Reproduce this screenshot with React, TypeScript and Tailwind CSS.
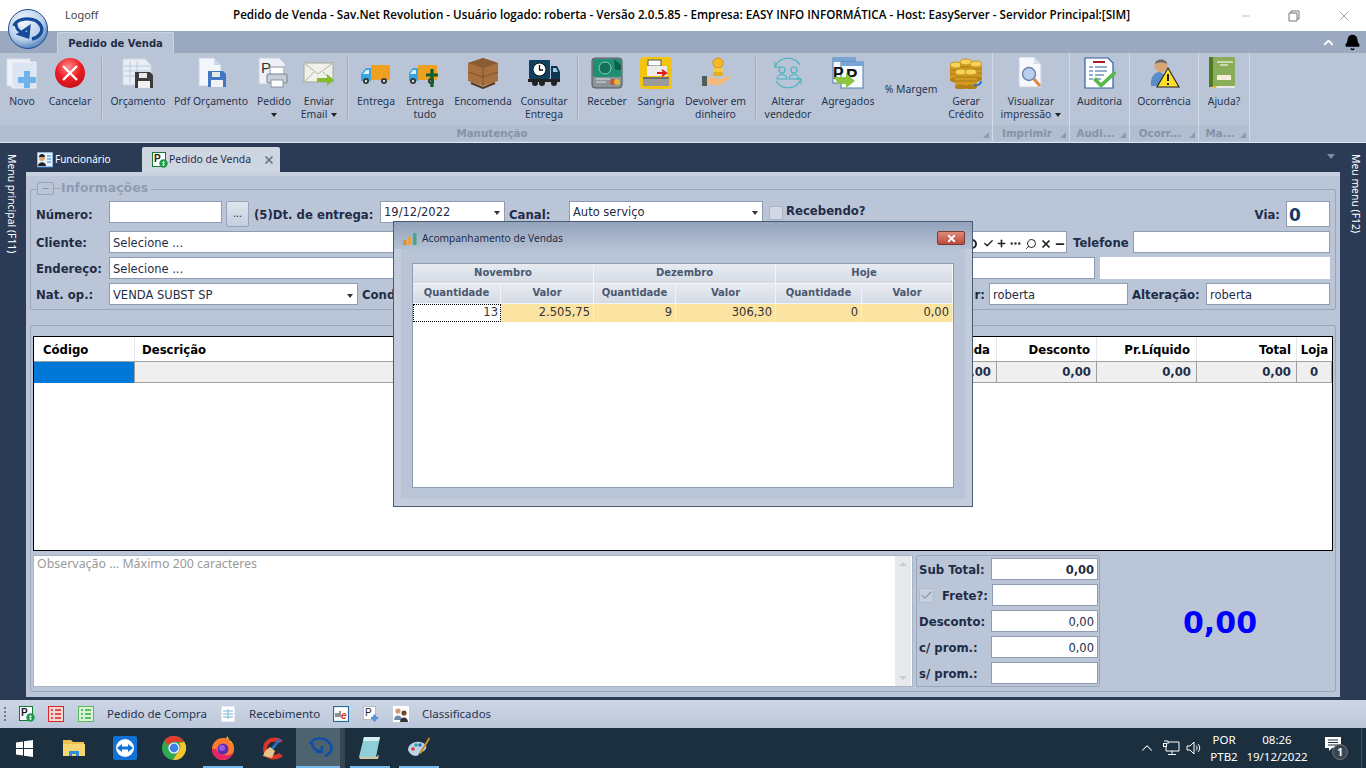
import type { ReactNode } from 'react'
import { ChevronUp, Bell, Check, Plus, Ellipsis, Search, X, Minus } from 'lucide-react'

const bold = "font-['DejaVu_Sans',sans-serif] font-bold text-[11.7px] text-[#1f2c47] whitespace-nowrap pt-[3px]"
const field = "font-['DejaVu_Sans',sans-serif] text-[11.5px] text-[#1f2c47]"

const Ic = ({ children, w = 32 }: { children: ReactNode; w?: number }) => (
  <svg width={w} height={32} viewBox={`0 0 ${w} 32`} className="block shrink-0">
    {children}
  </svg>
)

const Floppy = ({ x, y, c = '#3c3c3c' }: { x: number; y: number; c?: string }) => (
  <g transform={`translate(${x} ${y})`}>
    <path d="M0 0h15l3 3v13H0z" fill={c} />
    <rect x="4" y="1" width="8" height="5" fill="#e8e8e8" />
    <rect x="3" y="9" width="12" height="7" fill="#f2f2f2" />
  </g>
)

const Truck = ({ x = 0 }: { x?: number }) => (
  <g transform={`translate(${x} 0)`}>
    <rect x="11" y="8" width="19" height="15" rx="1" fill="#f0a020" />
    <path d="M1 24v-7l5-6h5v13z" fill="#3aa6e0" />
    <path d="M3 17l3-4h3v4z" fill="#d8f0fb" />
    <circle cx="6" cy="24" r="3" fill="#333" />
    <circle cx="6" cy="24" r="1.2" fill="#ddd" />
    <circle cx="24" cy="24" r="3" fill="#333" />
    <circle cx="24" cy="24" r="1.2" fill="#ddd" />
  </g>
)

const icons: Record<string, ReactNode> = {
  novo: (
    <Ic>
      <rect x="1" y="2" width="23" height="27" fill="#eef2f8" stroke="#d6dde8" />
      <rect x="6" y="5" width="24" height="26" fill="#dbe5f4" stroke="#eef2f8" />
      <path d="M18 16h6v6h6v6h-6v5h-6v-5h-6v-6h6z" fill="#6fb1e8" transform="translate(0 -2)" />
    </Ic>
  ),
  cancelar: (
    <Ic>
      <defs>
        <radialGradient id="cancelRed" cx="0.45" cy="0.3" r="0.8">
          <stop offset="0" stopColor="#ff8a8a" />
          <stop offset="0.5" stopColor="#ee1c25" />
          <stop offset="1" stopColor="#b80d14" />
        </radialGradient>
      </defs>
      <circle cx="16" cy="16" r="15" fill="url(#cancelRed)" />
      <path d="M9 9l14 14M23 9L9 23" stroke="#fff" strokeWidth="2.4" />
    </Ic>
  ),
  orcamento: (
    <Ic>
      <path d="M1 2h22l6 6v20H1z" fill="#e9eef5" stroke="#cfd6e0" />
      <path d="M2 9h26M2 14h26M2 19h26M8 4v22M15 4v22" stroke="#b9cbe0" />
      <Floppy x={13} y={15} />
    </Ic>
  ),
  pdf: (
    <Ic>
      <path d="M4 1h15l7 7v21H4z" fill="#f3f6fc" stroke="#c5d0e4" />
      <path d="M19 1v7h7z" fill="#cbd6ea" />
      <Floppy x={13} y={14} c="#3f78c0" />
    </Ic>
  ),
  pedido: (
    <Ic>
      <path d="M1 1h20l6 6v20H1z" fill="#eef1f6" stroke="#c9d0dc" />
      <text x="3" y="16" fontSize="15" fontFamily="'Liberation Sans',sans-serif" fill="#333">P</text>
      <rect x="12" y="10" width="14" height="8" fill="#fff" stroke="#8a94a5" />
      <rect x="9" y="17" width="20" height="9" rx="1" fill="#c8ced8" stroke="#77818f" />
      <rect x="13" y="23" width="12" height="7" fill="#fff" stroke="#8a94a5" />
    </Ic>
  ),
  email: (
    <Ic>
      <rect x="1" y="6" width="29" height="19" fill="#eff0ea" stroke="#a5a89e" />
      <path d="M1 6l14 11L30 6M1 25l10-10M30 25L20 15" fill="none" stroke="#b5b8ad" />
      <path d="M14 21h10v-4l7 6-7 6v-4H14z" fill="#82bd2c" />
    </Ic>
  ),
  entrega: <Ic><Truck /></Ic>,
  tudo: (
    <Ic>
      <Truck x={-2} />
      <path d="M17 18h12M23 12v18" stroke="#0b5c2b" strokeWidth="3.2" />
    </Ic>
  ),
  encomenda: (
    <Ic>
      <path d="M1 6l15-5 15 5v18l-15 5-15-5z" fill="#a8703f" />
      <path d="M1 6l15 5 15-5-15-5z" fill="#8a5c34" />
      <path d="M16 11v18M1 15l15 5 15-5" stroke="#7d5330" fill="none" />
      <path d="M4 26l12 5 12-5" stroke="#57391f" strokeWidth="2" fill="none" />
    </Ic>
  ),
  consultar: (
    <Ic>
      <rect x="1" y="3" width="21" height="19" rx="1" fill="#10405f" />
      <path d="M23 9h6l3 6v8h-9z" fill="#0c3550" />
      <path d="M25 11h3l2 4h-5z" fill="#9ecbe2" />
      <rect x="0" y="22" width="32" height="3" fill="#222" />
      <circle cx="11.5" cy="12.5" r="6.5" fill="#fff" stroke="#111" />
      <path d="M11.5 8v5h3.5" stroke="#111" strokeWidth="1.3" fill="none" />
      <circle cx="7" cy="26" r="3" fill="#222" />
      <circle cx="14" cy="26" r="3" fill="#222" />
      <circle cx="26" cy="26" r="3" fill="#222" />
    </Ic>
  ),
  receber: (
    <Ic>
      <rect x="1" y="1" width="30" height="30" rx="3" fill="#8a9499" stroke="#555" />
      <rect x="2" y="2" width="28" height="18" rx="2" fill="#1f8f73" />
      <circle cx="14" cy="11" r="6" fill="#177058" stroke="#7fd0ba" />
      <path d="M23 2l7 6v5h-6z" fill="#0f5f4b" />
      <path d="M5 22h14M5 25h10" stroke="#dfe3e3" />
      <circle cx="22" cy="25" r="3" fill="#c9524a" />
      <circle cx="26" cy="25" r="3" fill="#e5b52e" />
    </Ic>
  ),
  sangria: (
    <Ic>
      <rect x="0" y="0" width="32" height="32" rx="4" fill="#f4c411" />
      <rect x="8" y="3" width="13" height="6" fill="#fff" stroke="#555" />
      <rect x="7" y="9" width="20" height="10" fill="#ececec" />
      <path d="M17 16h8M22 13l4 3-4 3" stroke="#e01a1a" strokeWidth="2" fill="none" />
      <rect x="3" y="20" width="26" height="9" fill="#9a9a9a" />
      <rect x="3" y="20" width="26" height="2" fill="#6d6d6d" />
    </Ic>
  ),
  devolver: (
    <Ic>
      <circle cx="18" cy="6" r="5" fill="#f5b921" stroke="#d58f12" />
      <rect x="13" y="11" width="10" height="4" rx="1.5" fill="#f5c93a" />
      <rect x="13" y="15" width="10" height="4" rx="1.5" fill="#e6ae1f" />
      <rect x="2" y="19" width="5" height="10" fill="#4e5e5c" />
      <path d="M7 21c5-3 8 0 12 1l10-3c2 0 2 2 0 3l-9 6c-4 1-9-1-13-1z" fill="#f4ba7d" />
    </Ic>
  ),
  alterar: (
    <Ic>
      <g fill="none" stroke="#3fb3bd" strokeWidth="1.1">
        <path d="M3 10a14 14 0 0 1 25-2M29 22a14 14 0 0 1-25 2" />
        <path d="M3 5v5h5M29 27v-5h-5" />
        <circle cx="10" cy="13" r="3" />
        <circle cx="22" cy="13" r="3" />
        <path d="M5 22c0-6 10-6 10 0zM17 22c0-6 10-6 10 0z" />
      </g>
    </Ic>
  ),
  agregados: (
    <Ic>
      <rect x="1" y="1" width="22" height="25" fill="#f5f7fb" stroke="#4d7fb5" />
      <rect x="1" y="1" width="22" height="4" fill="#77a6d6" />
      <rect x="9" y="5" width="22" height="26" fill="#f8fafd" stroke="#4d7fb5" />
      <rect x="9" y="5" width="22" height="4" fill="#77a6d6" />
      <text x="1" y="22" fontSize="16" fontWeight="bold" fontFamily="'Liberation Sans',sans-serif" fill="#111">P</text>
      <text x="14" y="24" fontSize="17" fontWeight="bold" fontFamily="'Liberation Sans',sans-serif" fill="#111">P</text>
      <path d="M2 20h12v-4l9 8-9 7v-4H6z" fill="#8cc640" />
    </Ic>
  ),
  gerar: (
    <Ic>
      {[[0, 5], [10, 2], [20, 4], [5, 12], [15, 12]].map(([x, y], i) => (
        <g key={i}>
          <rect x={x} y={y + 3} width="12" height="15" fill="#d09a22" />
          <path d={`M${x} ${y + 8}h12M${x} ${y + 12}h12`} stroke="#a97a12" />
          <ellipse cx={x + 6} cy={y + 18} rx="6" ry="2.5" fill="#b37f12" />
          <ellipse cx={x + 6} cy={y + 3} rx="6" ry="3" fill="#f6d35a" stroke="#c8931c" />
        </g>
      ))}
      <path d="M24 28c4 1 7-1 7-4" stroke="#2f6fc4" strokeWidth="2" fill="none" />
    </Ic>
  ),
  visualizar: (
    <Ic>
      <path d="M4 0h15l7 7v23H4z" fill="#f6f8fd" stroke="#c6cfe3" />
      <path d="M19 0v7h7z" fill="#d5ddee" />
      <circle cx="14" cy="17" r="6.5" fill="#b9d0f2" stroke="#6c7fa8" strokeWidth="1.4" />
      <path d="M19 22l6 7" stroke="#d98b43" strokeWidth="3" />
    </Ic>
  ),
  auditoria: (
    <Ic>
      <path d="M1 1h23l5 5v25H1z" fill="#fff" stroke="#2c5fa8" strokeWidth="1.2" />
      <rect x="9" y="4" width="12" height="2" fill="#a52025" />
      <path d="M5 10h4M11 10h12M5 14h4M11 14h12M5 18h4M11 18h9M5 22h4M11 22h6" stroke="#2c5fa8" />
      <path d="M12 20l5 6L30 14l3 2-16 15-8-8z" fill="#57b947" />
    </Ic>
  ),
  ocorrencia: (
    <Ic>
      <circle cx="13" cy="9" r="6.5" fill="#d9a577" />
      <path d="M7 7c0-6 12-6 12 0-3-2-9-2-12 0z" fill="#6b6b6b" />
      <path d="M3 29c-1-10 4-14 9-14l6 4v10z" fill="#5b8cc8" />
      <path d="M20 11l11 19H9z" fill="#ffdf2a" stroke="#222" strokeWidth="1.1" />
      <path d="M20 17v7M20 26v2" stroke="#222" strokeWidth="2" />
    </Ic>
  ),
  ajuda: (
    <Ic>
      <rect x="1" y="0" width="26" height="30" rx="1" fill="#89ad5a" />
      <rect x="1" y="0" width="4" height="30" fill="#4f7a1f" />
      <path d="M9 5h16M12 8h8" stroke="#dfe9c9" strokeWidth="1.4" />
      <rect x="9" y="18" width="14" height="5" fill="#f5eedb" />
      <path d="M5 30h22" stroke="#e8e8e8" strokeWidth="2" />
      <path d="M4 29l3 3 2-3z" fill="#f2b01e" />
    </Ic>
  ),
}

type Item = { w: number; lines: string[]; icon?: string; arrow?: 'below' | 'inline' }

const RibbonItem = ({ item }: { item: Item }) => (
  <div className="flex flex-col items-center shrink-0 pt-1" style={{ width: item.w }}>
    {item.icon ? <div className="h-8">{icons[item.icon]}</div> : <div className="h-8 pt-[26px] text-[#26344f] whitespace-nowrap leading-[13px]">{item.lines[0]}</div>}
    {item.icon && (
      <div className="mt-[6px] flex flex-col items-center text-[#26344f] whitespace-nowrap leading-[13px]">
        {item.lines.map((l, i) => (
          <div key={l} className="flex items-center gap-1">
            {l}
            {item.arrow === 'inline' && i === item.lines.length - 1 && <Caret />}
          </div>
        ))}
        {item.arrow === 'below' && <div className="h-[13px] flex items-center"><Caret /></div>}
      </div>
    )}
  </div>
)

const Caret = () => <span className="inline-block w-0 h-0 border-x-[3px] border-x-transparent border-t-[4px] border-t-[#222]" />

const Sep = ({ ml = 0 }: { ml?: number }) => (
  <div className="w-px h-[62px] mt-[4px] bg-[#9fabbf] shadow-[1px_0_0_#c6d0df] shrink-0" style={{ marginLeft: ml }} />
)

const RibbonGroup = ({ w, label, children }: { w: number; label: string; children: ReactNode }) => (
  <div className="flex flex-col h-full shrink-0 border-r border-[#d3dbe7] bg-[#b9c5d7]" style={{ width: w }}>
    <div className="flex h-[72px]">{children}</div>
    <div className="h-[16px] bg-[#b1bdd0] flex items-center justify-center relative pt-[2px]">
      <span className="font-['DejaVu_Sans',sans-serif] font-bold text-[10.3px] text-[#8592a9] pr-2">{label}</span>
      <span className="absolute right-[3px] bottom-[3px] w-0 h-0 border-l-[6px] border-l-transparent border-b-[6px] border-b-[#8e9ab0]" />
    </div>
  </div>
)

const Box = ({ className = '', children }: { className?: string; children?: ReactNode }) => (
  <div className={`bg-white border border-[#8f9bb1] flex items-center pl-[3px] pr-[3px] pt-[3px] shrink-0 whitespace-nowrap overflow-hidden ${field} ${className}`}>{children}</div>
)

const SelectCaret = () => <span className="ml-auto mr-[1px] w-0 h-0 border-x-[3.5px] border-x-transparent border-t-[4px] border-t-[#333]" />

const Logo = ({ size = 40 }: { size?: number }) => (
  <svg width={size} height={size} viewBox="0 0 40 40" className="block">
    <defs>
      <radialGradient id="logoBall" cx="0.4" cy="0.3" r="0.8">
        <stop offset="0" stopColor="#f2f7fd" />
        <stop offset="0.6" stopColor="#b9cfe9" />
        <stop offset="1" stopColor="#2f63ad" />
      </radialGradient>
    </defs>
    <circle cx="20" cy="20" r="19.5" fill="url(#logoBall)" stroke="#1f4e94" />
    <path d="M6 17c3-9 22-10 27 0 3 6-3 12-9 13" fill="none" stroke="#164b9c" strokeWidth="3.4" />
    <path d="M8 15c0 6 6 10 12 9M21 18l-1 10-9-3z" fill="none" stroke="#164b9c" strokeWidth="3" />
  </svg>
)

const StatusDoc = ({ kind }: { kind: 'p' | 'red' | 'green' | 'table' | 'nfe' | 'plus' | 'people' }) => (
  <svg width="16" height="16" viewBox="0 0 16 16" className="block shrink-0">
    {kind === 'p' && (
      <>
        <rect x="0.5" y="0.5" width="13" height="14" fill="#fff" stroke="#0f7a34" />
        <text x="2" y="10" fontSize="10" fontWeight="bold" fontFamily="'Liberation Sans',sans-serif" fill="#222">P</text>
        <circle cx="11.5" cy="11.5" r="4.2" fill="#1b9c46" />
        <path d="M11.5 9v5M10 10.5h3M10 12.8h3" stroke="#fff" strokeWidth="0.7" />
      </>
    )}
    {(kind === 'red' || kind === 'green') && (
      <>
        <rect x="0.5" y="0.5" width="15" height="15" fill={kind === 'red' ? '#f3d6d6' : '#d8f5d8'} stroke={kind === 'red' ? '#d22' : '#5cb85c'} />
        <path d="M3 4h2M7 4h6M3 8h2M7 8h6M3 12h2M7 12h6" stroke={kind === 'red' ? '#d22' : '#3ea63e'} strokeWidth="1.4" />
      </>
    )}
    {kind === 'table' && (
      <>
        <rect x="1" y="0" width="14" height="16" fill="#fff" stroke="#cbd3de" />
        <path d="M3 5h10M3 8h10M3 11h10M8 3v10" stroke="#75b7d8" />
      </>
    )}
    {kind === 'nfe' && (
      <>
        <rect x="0.5" y="0.5" width="15" height="15" fill="#fff" stroke="#1f6a9c" strokeWidth="1.2" />
        <path d="M3 7v4M5 7v4M7 5v6" stroke="#222" />
        <text x="8" y="13" fontSize="10" fontStyle="italic" fontWeight="bold" fontFamily="'Liberation Sans',sans-serif" fill="#d32">e</text>
      </>
    )}
    {kind === 'plus' && (
      <>
        <rect x="0.5" y="0.5" width="12" height="13" fill="#fff" stroke="#bbb" />
        <text x="2" y="10" fontSize="10" fontFamily="'Liberation Sans',sans-serif" fill="#222">P</text>
        <path d="M8 12h7M11.5 8.5v7" stroke="#4f8fe0" strokeWidth="2.4" />
      </>
    )}
    {kind === 'people' && (
      <>
        <rect width="16" height="16" fill="#fff" />
        <circle cx="5" cy="5" r="2.6" fill="#c99a6b" />
        <path d="M1 14c0-6 8-6 8 0z" fill="#6e87a8" />
        <circle cx="11" cy="7" r="2.6" fill="#6b4a2c" />
        <path d="M7 16c0-6 8-6 8 0z" fill="#333" />
      </>
    )}
  </svg>
)

const manut: (Item | 'sep')[] = [
  { w: 44, lines: ['Novo'], icon: 'novo' },
  { w: 52, lines: ['Cancelar'], icon: 'cancelar' },
  'sep',
  { w: 72, lines: ['Orçamento'], icon: 'orcamento' },
  { w: 74, lines: ['Pdf Orçamento'], icon: 'pdf' },
  { w: 52, lines: ['Pedido'], icon: 'pedido', arrow: 'below' },
  { w: 38, lines: ['Enviar', 'Email'], icon: 'email', arrow: 'inline' },
  'sep',
  { w: 56, lines: ['Entrega'], icon: 'entrega' },
  { w: 42, lines: ['Entrega', 'tudo'], icon: 'tudo' },
  { w: 74, lines: ['Encomenda'], icon: 'encomenda' },
  { w: 48, lines: ['Consultar', 'Entrega'], icon: 'consultar' },
  'sep',
  { w: 58, lines: ['Receber'], icon: 'receber' },
  { w: 40, lines: ['Sangria'], icon: 'sangria' },
  { w: 79, lines: ['Devolver em', 'dinheiro'], icon: 'devolver' },
  'sep',
  { w: 64, lines: ['Alterar', 'vendedor'], icon: 'alterar' },
  { w: 56, lines: ['Agregados'], icon: 'agregados' },
  { w: 70, lines: ['% Margem'] },
  { w: 40, lines: ['Gerar', 'Crédito'], icon: 'gerar' },
]

const sepGaps = [5, 9, 9, 0]

const taskIcons: { w: number; icon: ReactNode; line?: number; active?: boolean }[] = [
  {
    w: 48,
    icon: (
      <svg width="17" height="17" viewBox="0 0 17 17"><path d="M0 2.4L7 1.4V8H0zM8 1.2L17 0V8H8zM0 9h7v6.6L0 14.6zM8 9h9v8l-9-1.2z" fill="#fff" /></svg>
    ),
  },
  {
    w: 52,
    icon: (
      <svg width="22" height="20" viewBox="0 0 22 20">
        <path d="M0 2h8l2 2h11v14H0z" fill="#f0c14b" />
        <rect x="0" y="6" width="22" height="12" fill="#f7d774" />
        <path d="M6 18v-5h10v5h-3v-2H9v2z" fill="#2f8fd8" />
      </svg>
    ),
  },
  {
    w: 49,
    icon: (
      <svg width="24" height="24" viewBox="0 0 24 24">
        <rect width="24" height="24" rx="2" fill="#0e72d6" />
        <circle cx="12" cy="12" r="9" fill="#fff" />
        <path d="M4 12l5-4v2.5h6V8l5 4-5 4v-2.5H9V16z" fill="#0e72d6" />
      </svg>
    ),
  },
  {
    w: 49,
    icon: (
      <svg width="24" height="24" viewBox="0 0 24 24">
        <circle cx="12" cy="12" r="12" fill="#2fa84f" />
        <path d="M12 0a12 12 0 0 1 10.4 6H12a6 6 0 0 0-5.6 3.7L2.3 4.3A12 12 0 0 1 12 0z" fill="#e33b2e" />
        <path d="M22.4 6A12 12 0 0 1 11 24l5.4-8.5A6 6 0 0 0 17 7z" fill="#f7c52b" />
        <circle cx="12" cy="12" r="5.6" fill="#fff" />
        <circle cx="12" cy="12" r="4.4" fill="#3f7fe8" />
      </svg>
    ),
  },
  {
    w: 49,
    line: 40,
    icon: (
      <svg width="24" height="24" viewBox="0 0 24 24">
        <circle cx="12" cy="13" r="11" fill="#ff7a2f" />
        <path d="M12 2c6 0 11 4 11 11 0-3-2-6-4-7 0-2-2-5-3-6 0 2-1 3-4 2z" fill="#ffc02e" />
        <path d="M1 13c0 6 5 11 11 11 5 0 9-3 10-7-5 4-13 3-17-4z" fill="#e5246b" />
        <circle cx="12" cy="13" r="5.5" fill="#5b2bb0" />
        <circle cx="11" cy="12" r="3" fill="#9a5be0" />
      </svg>
    ),
  },
  {
    w: 49,
    icon: (
      <svg width="24" height="24" viewBox="0 0 24 24">
        <path d="M23 5C20 1 12 0 7 4 2 8 2 16 6 21c5 4 13 3 17-1l-4-3c-3 2-7 3-10 0-3-3-2-8 1-10 3-2 7-1 9 0z" fill="#d9352b" />
        <path d="M19 2l2 2-8 10-2-2z" fill="#2a70c8" />
        <path d="M10 11l5 4-3 7-9-2 2-5z" fill="#e6c48a" />
      </svg>
    ),
  },
  {
    w: 49,
    line: 44,
    active: true,
    icon: (
      <svg width="24" height="22" viewBox="0 0 24 22" fill="none" stroke="#0f4fa8" strokeWidth="2.6">
        <path d="M1 7c4-8 17-7 21 1 2 5-1 9-6 11" />
        <path d="M3 6c0 5 5 9 10 8M13 9v6H7" />
      </svg>
    ),
  },
  {
    w: 49,
    line: 40,
    icon: (
      <svg width="24" height="24" viewBox="0 0 24 24">
        <path d="M6 1h16l-4 20H1z" fill="#8fd0d8" />
        <path d="M6 1h16l-1 4H5z" fill="#d5eef0" />
        <path d="M1 21h17l3-2-1 4H2z" fill="#d8c6a0" />
      </svg>
    ),
  },
  {
    w: 49,
    line: 40,
    icon: (
      <svg width="24" height="24" viewBox="0 0 24 24">
        <path d="M1 14c0-6 7-9 12-8 6 1 8 5 5 8s-5 1-6 4-8 3-11-4z" fill="#b9d3e8" />
        <circle cx="6" cy="13" r="1.8" fill="#d33" />
        <circle cx="9" cy="9" r="1.8" fill="#2a8" />
        <circle cx="13" cy="9" r="1.8" fill="#36c" />
        <path d="M22 1l1 2-9 15-2-1z" fill="#d08a2c" />
      </svg>
    ),
  },
]

const dlgHead = "flex items-center justify-center pb-[2px] bg-linear-to-b from-[#e8ebf1] to-[#d5dbe5] border-r border-b border-[#f2f4f7] font-['DejaVu_Sans',sans-serif] font-bold text-[10px] text-[#4b5870]"
const dlgCell = "flex items-center justify-end pr-[3px] bg-[#fbe3a2] border-r border-[#fdf0c8] font-['DejaVu_Sans',sans-serif] text-[11.5px] text-[#333]"

const GridHead = ({ className, children }: { className: string; children?: ReactNode }) => (
  <div className={`h-full flex items-center border-r border-[#e4e7ec] shrink-0 ${bold} !pt-[3px] text-black ${className}`}>{children}</div>
)
const GridVal = ({ className, children }: { className: string; children?: ReactNode }) => (
  <div className={`h-full flex items-center bg-[#efefef] border-r border-b border-[#a0a0a0] shrink-0 ${bold} !pt-[2px] text-[#1f2c47] ${className}`}>{children}</div>
)

const TotalRow = ({ label, value, strong, w = 107, check }: { label: string; value?: string; strong?: boolean; w?: number; check?: boolean }) => (
  <div className="flex items-center h-[22px]">
    {check && (
      <span className="w-[15px] h-[15px] bg-[#c5cfdd] border border-[#b0bccd] flex items-center justify-center mr-[8px] ml-[1px]">
        <Check size={13} className="text-[#8995a9]" />
      </span>
    )}
    <span className={`${bold} ${check ? '' : 'ml-[1px]'}`}>{label}</span>
    <Box className={`ml-auto h-[22px] justify-end ${strong ? 'font-bold' : ''}`}>
      <span style={{ width: w - 8 }} className="text-right">{value}</span>
    </Box>
  </div>
)

export default function App() {
  let sepIndex = 0
  return (
    <div className="relative w-[1366px] h-[768px] overflow-hidden flex flex-col bg-[#2b3a55] font-['Noto_Sans',sans-serif] text-[10.4px]">
      {/* title bar */}
      <div className="h-[31px] bg-white flex items-center shrink-0 relative">
        <div className="w-[65px] pl-[65px] text-[#444] -mt-[1px] text-[11px]">Logoff</div>
        <div className="absolute left-[233px] top-[6px] font-['Open_Sans',sans-serif] font-semibold text-[11.65px] text-black whitespace-nowrap">
          Pedido de Venda - Sav.Net Revolution - Usuário logado: roberta - Versão 2.0.5.85 - Empresa: EASY INFO INFORMÁTICA - Host: EasyServer - Servidor Principal:[SIM]
        </div>
        <div className="ml-auto flex items-center text-[#777] mr-[14px] gap-[36px]">
          <Minus size={14} strokeWidth={1} className="w-[12px]" />
          <svg width="12" height="12" viewBox="0 0 12 12" fill="none" stroke="#777"><path d="M3 3V1h8v8H9M1 3h8v8H1z" /></svg>
          <X size={16} strokeWidth={1} />
        </div>
      </div>
      <div className="absolute left-[8px] top-[9px] z-20"><Logo /></div>

      {/* ribbon tabs */}
      <div className="h-[22px] bg-[#9ba9c0] flex items-end shrink-0 relative">
        <div className="ml-[57px] w-[117px] h-[21px] bg-[#b9c5d7] border border-b-0 border-[#c8d2e0] rounded-t-[2px] flex items-center justify-center font-['DejaVu_Sans',sans-serif] font-bold text-[10px] text-[#1f2c47]">
          Pedido de Venda
        </div>
        <div className="ml-auto mr-[5px] mb-[2px] flex items-center gap-[8px]">
          <ChevronUp size={15} strokeWidth={3} className="text-white" />
          <Bell size={17} className="text-black fill-black" />
        </div>
      </div>

      {/* ribbon */}
      <div className="h-[90px] bg-[#b9c5d7] flex shrink-0 border-b border-[#dfe5ee] pb-[1px]">
        <RibbonGroup w={993} label="Manutenção">
          {manut.map((it, i) =>
            it === 'sep' ? <Sep key={i} ml={sepGaps[sepIndex++]} /> : <RibbonItem key={i} item={it} />,
          )}
        </RibbonGroup>
        <RibbonGroup w={77} label="Imprimir">
          <RibbonItem item={{ w: 76, lines: ['Visualizar', 'impressão'], icon: 'visualizar', arrow: 'inline' }} />
        </RibbonGroup>
        <RibbonGroup w={60} label="Audi...">
          <RibbonItem item={{ w: 59, lines: ['Auditoria'], icon: 'auditoria' }} />
        </RibbonGroup>
        <RibbonGroup w={69} label="Ocorr...">
          <RibbonItem item={{ w: 68, lines: ['Ocorrência'], icon: 'ocorrencia' }} />
        </RibbonGroup>
        <RibbonGroup w={51} label="Ma...">
          <RibbonItem item={{ w: 50, lines: ['Ajuda?'], icon: 'ajuda' }} />
        </RibbonGroup>
      </div>

      {/* workspace */}
      <div className="flex-1 flex min-h-0 bg-[#2b3a55]">
        <div className="w-[26px] shrink-0 pt-[11px] pr-[4px] flex justify-center">
          <span className="[writing-mode:vertical-rl] text-[10.4px] text-white whitespace-nowrap">Menu principal (F11)</span>
        </div>
        <div className="flex-1 flex flex-col min-w-0 pb-[3px]">
          <div className="h-[29px] shrink-0 flex items-end relative">
            <div className="h-[25px] w-[116px] flex items-center pl-[11px] gap-[2px] text-white text-[10px]">
              <svg width="16" height="16" viewBox="0 0 16 16">
                <rect width="16" height="15" fill="#e8f2fc" stroke="#2e7cc4" />
                <circle cx="5" cy="6" r="3" fill="#d9a577" />
                <path d="M2 5c0-4 6-4 6 0zM1 14c0-5 8-5 8 0z" fill="#222" />
                <path d="M10 4h4M10 7h4M10 10h4" stroke="#2e7cc4" />
              </svg>
              Funcionário
            </div>
            <div className="h-[25px] w-[138px] bg-[#ced6e2] rounded-t-[2px] flex items-center pl-[10px] gap-[1px] text-[#1f2c47]">
              <StatusDoc kind="p" />
              Pedido de Venda
              <X size={12} strokeWidth={3.5} className="ml-auto mr-[5px] text-[#69758a]" />
            </div>
            <span className="absolute right-[5px] top-[11px] w-0 h-0 border-x-[4px] border-x-transparent border-t-[5px] border-t-[#7b8aa5]" />
          </div>

          <div className="flex-1 min-h-0 bg-[#bac6d8] border-t-[4px] border-[#c8d1df] px-[4px] flex flex-col">
            {/* Informações */}
            <div className="mt-[13px] h-[121px] shrink-0 border border-[#9aa6bb] rounded-[2px] relative px-[5px] pt-[11px] flex flex-col gap-[4px]">
              <div className="absolute left-[6px] -top-[9px] h-[15px] flex items-center bg-[#bac6d8] pr-[3px]">
                <span className="w-[17px] h-[13px] border border-[#98a4b9] rounded-[2px] flex items-center justify-center text-[#7e8aa0]">
                  <Minus size={9} />
                </span>
                <span className="w-[7px] h-px bg-[#9aa6bb]" />
                <span className="font-['DejaVu_Sans',sans-serif] font-bold text-[12.5px] text-[#8f9bb2]">Informações</span>
              </div>

              <div className="flex items-center h-[26px]">
                <span className={`${bold} w-[73px]`}>Número:</span>
                <Box className="w-[113px] h-[22px] self-start !pt-0" />
                <div className="ml-[4px] w-[23px] h-[26px] rounded-[2px] border border-[#98a4b9] bg-linear-to-b from-[#dfe5ee] to-[#c3cede] flex items-center justify-center text-[#333]">...</div>
                <span className={`${bold} ml-[5px] w-[126px]`}>(5)Dt. de entrega:</span>
                <Box className="w-[125px] h-[22px] self-start !pt-[2px]">19/12/2022<SelectCaret /></Box>
                <span className={`${bold} ml-[4px] w-[60px]`}>Canal:</span>
                <Box className="w-[194px] h-[22px] self-start !pt-[2px]">Auto serviço<SelectCaret /></Box>
                <span className="ml-[6px] w-[14px] h-[14px] mb-[3px] bg-[#d2d9e4] border border-[#a7b2c4] shrink-0" />
                <span className={`${bold} !pt-0 mb-[4px] ml-[3px]`}>Recebendo?</span>
                <span className={`${bold} ml-auto mr-[6px]`}>Via:</span>
                <Box className="w-[44px] h-[26px] !text-[17px] font-bold text-[#143a6b] !pl-[2px]">0</Box>
              </div>

              <div className="flex items-center h-[22px]">
                <span className={`${bold} w-[73px]`}>Cliente:</span>
                <Box className="w-[958px] h-[22px] !pr-0">
                  Selecione ...
                  <span className="ml-auto flex items-center text-[#222]">
                    <span className="w-[10px] h-[10px] rounded-full border-2 border-[#222] mr-[6px]" />
                    <Check size={11} strokeWidth={3} className="mr-[2px]" />
                    <Plus size={11} strokeWidth={3.5} className="mr-[2px]" />
                    <Ellipsis size={13} strokeWidth={2.5} className="mr-[3px]" />
                    <Search size={12} className="-scale-x-100 mr-[3px]" />
                    <X size={12} strokeWidth={3.5} className="mr-[2px]" />
                    <Minus size={12} strokeWidth={3.5} />
                  </span>
                </Box>
                <span className={`${bold} ml-[6px] w-[60px]`}>Telefone</span>
                <Box className="w-[197px] h-[22px]" />
              </div>

              <div className="flex items-center h-[22px]">
                <span className={`${bold} w-[73px]`}>Endereço:</span>
                <Box className="w-[986px] h-[22px]">Selecione ...</Box>
                <div className="ml-[5px] w-[230px] h-[22px] bg-white" />
              </div>

              <div className="flex items-center h-[22px]">
                <span className={`${bold} w-[73px]`}>Nat. op.:</span>
                <Box className="w-[249px] h-[22px]">VENDA SUBST SP<SelectCaret /></Box>
                <span className={`${bold} ml-[4px]`}>Cond</span>
                <span className={`${bold} ml-auto mr-[4px]`}>r:</span>
                <Box className="w-[139px] h-[22px]">roberta</Box>
                <span className={`${bold} ml-[4px] w-[74px]`}>Alteração:</span>
                <Box className="w-[124px] h-[22px]">roberta</Box>
              </div>
            </div>

            {/* itens */}
            <div className="mt-[15px] flex-1 min-h-0 mb-[5px] border border-[#9aa6bb] rounded-[2px] px-[2px] pt-[10px] flex flex-col">
              <div className="h-[215px] shrink-0 bg-white border border-black flex flex-col">
                <div className="h-[24px] flex shrink-0">
                  <GridHead className="w-[101px] pl-[9px]">Código</GridHead>
                  <GridHead className="w-[762px] pl-[7px]">Descrição</GridHead>
                  <GridHead className="w-[100px] justify-end pr-[6px]">Pr.Venda</GridHead>
                  <GridHead className="w-[100px] justify-end pr-[6px]">Desconto</GridHead>
                  <GridHead className="w-[100px] justify-end pr-[6px]">Pr.Líquido</GridHead>
                  <GridHead className="w-[100px] justify-end pr-[5px]">Total</GridHead>
                  <GridHead className="flex-1 justify-center !border-r-0">Loja</GridHead>
                </div>
                <div className="h-[22px] flex shrink-0 border-t border-[#a0a0a0]">
                  <div className="w-[101px] h-full bg-[#0078d7] border-r border-[#a0a0a0] shrink-0" />
                  <GridVal className="w-[762px]" />
                  <GridVal className="w-[100px] justify-end pr-[5px]">0,00</GridVal>
                  <GridVal className="w-[100px] justify-end pr-[5px]">0,00</GridVal>
                  <GridVal className="w-[100px] justify-end pr-[5px]">0,00</GridVal>
                  <GridVal className="w-[100px] justify-end pr-[5px]">0,00</GridVal>
                  <GridVal className="flex-1 justify-center">0</GridVal>
                </div>
              </div>

              <div className="flex mt-[4px] h-[132px] shrink-0">
                <div className="w-[880px] h-[132px] bg-white border border-[#a8b3c5] flex shrink-0">
                  <div className="flex-1 px-[3px] pt-[1px] text-[12.4px] leading-[14px] text-[#9a9a9a]">Observação ... Máximo 200 caracteres</div>
                  <div className="w-[16px] mr-[1px] bg-[#e8e9ec] flex flex-col items-center justify-between py-[6px]">
                    <span className="w-0 h-0 border-x-[4px] border-x-transparent border-b-[4px] border-b-[#c9ccd2]" />
                    <span className="w-0 h-0 border-x-[4px] border-x-transparent border-t-[4px] border-t-[#c9ccd2]" />
                  </div>
                </div>
                <div className="ml-[3px] w-[184px] h-[132px] border border-[#9aa6bb] rounded-[2px] px-[1px] pt-[2px] flex flex-col gap-[4px] shrink-0">
                  <TotalRow label="Sub Total:" value="0,00" strong />
                  <TotalRow label="Frete?:" check w={106} />
                  <TotalRow label="Desconto:" value="0,00" />
                  <TotalRow label="c/ prom.:" value="0,00" />
                  <TotalRow label="s/ prom.:" />
                </div>
                <div className="flex-1 flex items-center justify-center pl-[7px] pt-[2px] font-['DejaVu_Sans',sans-serif] font-bold text-[30px] text-[#0000ff]">0,00</div>
              </div>
            </div>
          </div>
        </div>
        <div className="w-[26px] shrink-0 pt-[11px] pl-[5px] flex justify-center">
          <span className="[writing-mode:vertical-rl] text-[10.4px] text-white whitespace-nowrap">Meu menu (F12)</span>
        </div>
      </div>

      {/* status bar */}
      <div className="h-[28px] shrink-0 bg-linear-to-b from-[#cdd6e5] to-[#bcc7da] flex items-center text-[#26344f] text-[11.5px]">
        <div className="ml-[4px] w-[2px] h-[14px] border-l-[2px] border-dotted border-[#6f7c94]" />
        <div className="ml-[13px]"><StatusDoc kind="p" /></div>
        <div className="ml-[13px]"><StatusDoc kind="red" /></div>
        <div className="ml-[14px]"><StatusDoc kind="green" /></div>
        <span className="ml-[13px] whitespace-nowrap w-[99px]">Pedido de Compra</span>
        <div className="ml-[14px]"><StatusDoc kind="table" /></div>
        <span className="ml-[13px] whitespace-nowrap w-[70px]">Recebimento</span>
        <div className="ml-[14px]"><StatusDoc kind="nfe" /></div>
        <div className="ml-[14px]"><StatusDoc kind="plus" /></div>
        <div className="ml-[14px]"><StatusDoc kind="people" /></div>
        <span className="ml-[13px] whitespace-nowrap">Classificados</span>
      </div>

      {/* taskbar */}
      <div className="h-[40px] shrink-0 bg-[#1b2f3f] flex text-white">
        {taskIcons.map((t, i) => (
          <div key={i} className="relative flex items-center justify-center shrink-0 h-full" style={{ width: t.w }}>
            {t.active && <div className="absolute left-0 top-0 bottom-0 w-[44px] bg-[#4d6470] border-r-[5px] border-[#37474f] box-content" />}
            <div className="relative">{t.icon}</div>
            {t.line && <div className={`absolute bottom-0 h-[2px] bg-[#76b9ed] ${t.active ? 'left-0' : 'left-1/2 -translate-x-1/2'}`} style={{ width: t.line }} />}
          </div>
        ))}
        <div className="ml-auto flex items-center">
          <ChevronUp size={18} strokeWidth={1.4} className="text-white" />
          <svg width="17" height="16" viewBox="0 0 17 16" fill="none" stroke="#fff" className="ml-[7px]">
            <path d="M1 1h4v3M5 2h11v9H3V7M9 11v3M5 14.5h8" />
            <rect x="0.5" y="3.5" width="3" height="3" />
          </svg>
          <svg width="16" height="14" viewBox="0 0 16 14" fill="none" stroke="#fff" className="ml-[6px]">
            <path d="M1 5h3l4-4v12l-4-4H1zM10 4.5c1.4 1 1.4 4 0 5M12 3c2.2 2 2.2 6 0 8" />
          </svg>
          <div className="ml-[6px] w-[32px] flex flex-col items-center text-[11.5px] leading-[17px]">
            <span>POR</span>
            <span>PTB2</span>
          </div>
          <div className="ml-[8px] w-[58px] flex flex-col items-center text-[11.5px] leading-[17px]">
            <span>08:26</span>
            <span>19/12/2022</span>
          </div>
          <div className="ml-[19px] relative w-[36px] h-[26px]">
            <svg width="17" height="16" viewBox="0 0 17 16" className="absolute left-0 top-[2px]">
              <path d="M0 0h16v11H7l-3 3v-3H0z" fill="#fff" />
              <path d="M3 3h10M3 5.5h10M3 8h10" stroke="#1b2f3f" />
            </svg>
            <span className="absolute left-[7px] top-[9px] w-[16px] h-[16px] rounded-full bg-[#3d4650] border border-[#6a727a] flex items-center justify-center text-[10px] font-bold">1</span>
          </div>
          <div className="w-px h-full bg-[#44525e] mr-[4px]" />
        </div>
      </div>

      {/* dialog */}
      <div className="absolute left-[393px] top-[221px] w-[580px] h-[286px] z-30 border border-[#4a5a75] bg-[#c2ccdb] flex flex-col">
        <div className="h-[27px] shrink-0 bg-linear-to-b from-[#94a3bc] to-[#b4c0d3] flex items-center pl-[9px] pt-[6px] relative">
          <svg width="14" height="12" viewBox="0 0 14 12" className="shrink-0">
            <rect x="0" y="7" width="3.5" height="5" fill="#e98a2e" />
            <rect x="5" y="4" width="3.5" height="8" fill="#e9a33a" />
            <rect x="10" y="0" width="3.5" height="12" fill="#45a88e" />
          </svg>
          <span className="ml-[5px] text-[#1f2c47] text-[10.2px] whitespace-nowrap">Acompanhamento de Vendas</span>
          <div className="absolute right-[7px] top-[9px] w-[28px] h-[14px] rounded-[2px] border border-[#7a3a34] bg-linear-to-b from-[#e08a7c] to-[#bc4a3a] flex items-center justify-center">
            <X size={11} strokeWidth={4} className="text-white" />
          </div>
        </div>
        <div className="flex-1 mx-[7px] mb-[7px] mt-0 bg-[#b9c5d7] px-[11px] pt-[14px] pb-[11px]">
          <div className="h-[225px] w-[542px] bg-white border border-[#8f9bb1]">
            <div className="grid grid-cols-[88px_93px_82px_100px_86px_91px] grid-rows-[20px_20px_18px]">
              <div className={`col-span-2 ${dlgHead}`}>Novembro</div>
              <div className={`col-span-2 ${dlgHead}`}>Dezembro</div>
              <div className={`col-span-2 ${dlgHead}`}>Hoje</div>
              <div className={dlgHead}>Quantidade</div>
              <div className={dlgHead}>Valor</div>
              <div className={dlgHead}>Quantidade</div>
              <div className={dlgHead}>Valor</div>
              <div className={dlgHead}>Quantidade</div>
              <div className={dlgHead}>Valor</div>
              <div className="flex items-center justify-end pr-[2px] bg-white border border-dotted border-black font-['DejaVu_Sans',sans-serif] text-[11.5px] text-[#333]">13</div>
              <div className={dlgCell}>2.505,75</div>
              <div className={dlgCell}>9</div>
              <div className={dlgCell}>306,30</div>
              <div className={dlgCell}>0</div>
              <div className={dlgCell}>0,00</div>
            </div>
          </div>
        </div>
      </div>
    </div>
  )
}
